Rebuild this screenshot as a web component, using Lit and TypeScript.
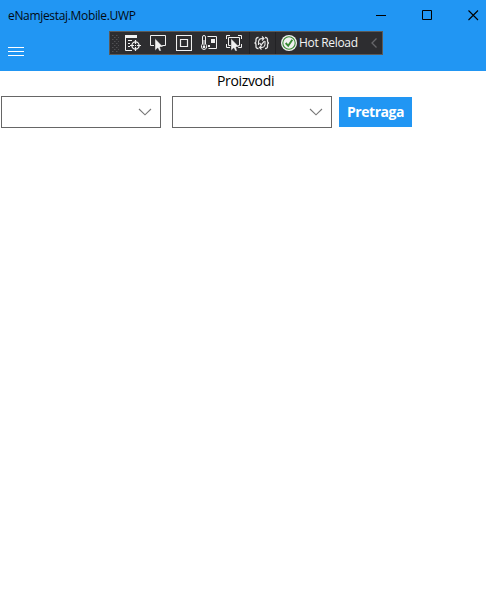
import { LitElement, html, css, svg } from "lit";
import { customElement } from "lit/decorators.js";

@customElement("combo-box")
class ComboBox extends LitElement {
  static styles = css`
    :host { display: flex; box-sizing: border-box; width: 160px; height: 32px; border: 1px solid #666; background: #fff; align-items: center; justify-content: flex-end; padding-right: 8px; }
    svg { display: block; }
  `;
  render() {
    return html`<svg width="14" height="8" viewBox="0 0 14 8"><path d="M1 1L7 6.8L13 1" fill="none" stroke="#777" stroke-width="1.1"/></svg>`;
  }
}

const cursor = svg`<path d="M5 3.5V15.5L7.8 13L9.3 16H11.2L10 12H13.3Z" fill="#f0f0f0" stroke="#2d2d30" stroke-width=".4"/>`;

@customElement("debug-bar")
class DebugBar extends LitElement {
  static styles = css`
    :host { display: flex; box-sizing: border-box; width: 274px; height: 24px; border: 1px solid #5c5a58; background: #2d2d30; align-items: center; }
    svg { display: block; flex: none; }
    .grip { margin-left: 2px; }
    .tools { display: flex; margin-left: 6px; }
    .tools svg + svg { margin-left: 9px; }
    .tools .frame.frame { margin-left: 10px; }
    .sep { flex: none; width: 1px; height: 22px; background: #222225; }
    .sep.first { margin-left: 7px; }
    .code { margin: 0 5px 0 4px; }
    .ok { margin-left: 5px; }
    .label { flex: none; font: 12px/16px "Open Sans", sans-serif; letter-spacing: -0.32px; color: #f4f4f4; margin-left: 2px; width: 60px; white-space: nowrap; }
    .collapse { margin-left: 11px; }
  `;
  render() {
    const dots = [];
    for (let row = 0; row < 9; row++)
      for (let col = 0; col < 2; col++)
        dots.push(svg`<rect x=${col * 4 + (row % 2 ? 2 : 0)} y=${row * 2} width="1.5" height="1" fill="#505053"/>`);
    return html`
      <svg class="grip" width="7" height="17">${dots}</svg>
      <div class="tools">
        <svg width="16" height="16" fill="none" stroke="#f0f0f0">
          <path d="M0 0H12V3H0Z" fill="#f0f0f0" stroke="none"/>
          <path d="M.5 2V15.5H7M3 5.5H7M3 8.5H5M3 11.5H5"/>
          <circle cx="10.5" cy="10.5" r="3.6" stroke-width="1.3"/>
          <path d="M10.5 5V9M10.5 12V16M5 10.5H9M12 10.5H16" stroke-width="1.2"/>
          <path d="M10 10H11V11H10Z" fill="#f0f0f0" stroke="none"/>
        </svg>
        <svg width="16" height="16" fill="none" stroke="#f0f0f0">
          <path d="M4 10.5H.5V.5H15.5V10.5H11" />
          ${cursor}
        </svg>
        <svg class="frame" width="16" height="16" fill="none" stroke="#f0f0f0">
          <path d="M.5 .5H15.5V15.5H.5Z" stroke-width="1.1"/>
          <path d="M4.5 4.5H11.5V11.5H4.5Z" stroke-width="1.2"/>
        </svg>
        <svg width="16" height="16" fill="none" stroke="#f0f0f0">
          <path d="M1.5 9V2Q1.5 .5 3 .5T4.5 2V9Q6 10.2 5.7 12Q5.2 14.5 3 14.5T.5 12Q.1 10.2 1.5 9Z"/>
          <path d="M3 5V12"/><circle cx="3" cy="12" r="1.3" fill="#f0f0f0" stroke="none"/>
          <path d="M6.5 1.5H15.5V13.5H7.5"/>
          <path d="M10 4H14V8H10ZM7 10H9V12H7Z" fill="#f0f0f0" stroke="none"/>
        </svg>
        <svg width="16" height="16" fill="none" stroke="#f0f0f0">
          <path d="M.5 4V.5H4M12 .5H15.5V4M15.5 9V12.5H12M.5 9V12.5H4"/>
          <path d="M5 10.5H2.5V2.5H13.5V10.5H11"/>
          ${cursor}
        </svg>
      </div>
      <div class="sep first"></div>
      <svg class="code" width="16" height="16" fill="none" stroke="#e7e7e7">
        <path d="M4.5 2.5Q2 2.3 2 4.5V6Q2 8 .5 8Q2 8 2 10V11.5Q2 13.7 4.5 13.5M11 2.5Q13.5 2.3 13.5 4.5V6Q13.5 8 15 8Q13.5 8 13.5 10V11.5Q13.5 13.7 11 13.5" stroke-width="1.3"/>
        <path d="M4.5 10V6.5Q5 3.5 8 3.5H9.5M11 6V9.5Q10.5 12.5 7.5 12.5H6M8 1.5L10 3.5L8 5.5M7.5 10.5L5.5 12.5L7.5 14.5" stroke-width="1.1"/>
        <path d="M5.5 8L7.2 9.8L10.5 6" stroke-width="1.2"/>
      </svg>
      <div class="sep"></div>
      <svg class="ok" width="16" height="16" fill="none">
        <circle cx="8" cy="8" r="8" fill="#f1f1f1"/>
        <circle cx="8" cy="8" r="6.2" stroke="#388a34" stroke-width="1.1"/>
        <path d="M4.7 8L7.2 10.8L11.3 4.8" stroke="#388a34" stroke-width="1.9"/>
      </svg>
      <span class="label">Hot Reload</span>
      <svg class="collapse" width="8" height="10"><path d="M6.5 .5L2 5L6.5 9.5" fill="none" stroke="#66666a" stroke-width="1.3"/></svg>
    `;
  }
}

@customElement("app-root")
class AppRoot extends LitElement {
  static styles = css`
    :host { display: block; width: 486px; height: 592px; background: #fff; overflow: hidden; font-family: "Open Sans", "Noto Sans", sans-serif; color: #000; }
    header { position: relative; height: 71px; background: #2196f3; }
    .titlebar { display: flex; height: 31px; align-items: center; }
    .name { font-size: 12px; line-height: 16px; letter-spacing: -0.33px; margin-left: 8px; flex: 1; color: #020a12; }
    .controls { display: flex; gap: 35px; padding-right: 7px; }
    svg { display: block; }
    .menu { padding: 16px 0 0 8px; }
    debug-bar { position: absolute; left: 109px; top: 31px; }
    .title { display: block; width: 60px; margin: 0 0 0 217px; font-size: 14px; line-height: 20px; white-space: nowrap; letter-spacing: -0.34px; }
    .row { display: flex; align-items: center; padding: 5px 0 0 1px; }
    .row combo-box + combo-box { margin-left: 11px; }
    .search { width: 73px; height: 30px; margin-left: 7px; border: 0; padding: 0; background: #2196f3; color: #fff; font: 700 14px/30px "Open Sans", sans-serif; letter-spacing: -0.45px; }
  `;
  render() {
    return html`
      <header>
        <div class="titlebar">
          <span class="name">eNamjestaj.Mobile.UWP</span>
          <div class="controls">
            <svg width="11" height="11"><path d="M0 5.5H10" stroke="#000"/></svg>
            <svg width="11" height="11"><path d="M.5 .5H9.5V9.5H.5Z" fill="none" stroke="#000"/></svg>
            <svg width="11" height="11"><path d="M.5 .5L10 10M10 .5L.5 10" stroke="#000" stroke-width="1.1"/></svg>
          </div>
        </div>
        <svg class="menu" width="16" height="9"><path d="M0 .5H16M0 4.5H16M0 8.5H16" stroke="#fff"/></svg>
        <debug-bar></debug-bar>
      </header>
      <span class="title">Proizvodi</span>
      <div class="row">
        <combo-box></combo-box>
        <combo-box></combo-box>
        <button class="search">Pretraga</button>
      </div>
    `;
  }
}
